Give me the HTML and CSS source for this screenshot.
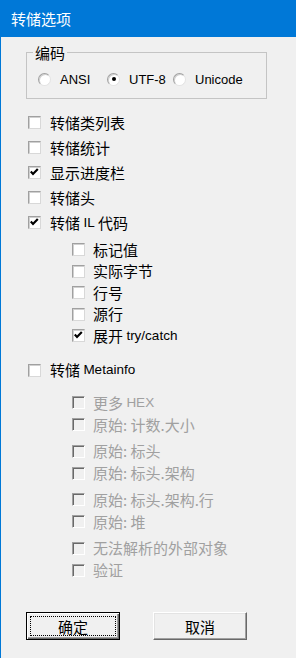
FILE: index.html
```html
<!DOCTYPE html>
<html lang="zh-CN">
<head>
    <meta charset="UTF-8">
    <meta name="viewport" content="width=device-width, initial-scale=1.0">
    <title>转储选项</title>
    <link rel="stylesheet" href="styles.css">
</head>
<body>

<div class="window">
    <div class="titlebar">转储选项</div>

    <div class="content">
        <!-- 编码 -->
        <div class="group">
            <span class="group-label">编码</span>
            <div class="radios">
                <label class="radio-item"><span class="radio"></span><span class="lat">ANSI</span></label>
                <label class="radio-item"><span class="radio selected"></span><span class="lat">UTF-8</span></label>
                <label class="radio-item"><span class="radio"></span><span class="lat">Unicode</span></label>
            </div>
        </div>

        <div class="checks">
            <div class="row"><span class="box"></span>转储类列表</div>
            <div class="row"><span class="box"></span>转储统计</div>
            <div class="row"><span class="box"><svg viewBox="0 0 11 11"><polyline points="1.8,4.6 4,6.9 8.8,2"/></svg></span>显示进度栏</div>
            <div class="row"><span class="box"></span>转储头</div>
            <div class="row"><span class="box"><svg viewBox="0 0 11 11"><polyline points="1.8,4.6 4,6.9 8.8,2"/></svg></span>转储 <span class="lat">IL</span> 代码</div>

            <div class="sub">
                <div class="row"><span class="box"></span>标记值</div>
                <div class="row"><span class="box"></span>实际字节</div>
                <div class="row"><span class="box"></span>行号</div>
                <div class="row"><span class="box"></span>源行</div>
                <div class="row"><span class="box"><svg viewBox="0 0 11 11"><polyline points="1.8,4.6 4,6.9 8.8,2"/></svg></span>展开 <span class="lat">try/catch</span></div>
            </div>

            <div class="row meta"><span class="box"></span>转储 <span class="lat">Metainfo</span></div>

            <div class="disabled">
                <div class="pair">
                    <div class="row"><span class="box"></span>更多 <span class="lat">HEX</span></div>
                    <div class="row"><span class="box"></span>原始: 计数.大小</div>
                </div>
                <div class="pair">
                    <div class="row"><span class="box"></span>原始: 标头</div>
                    <div class="row"><span class="box"></span>原始: 标头.架构</div>
                </div>
                <div class="pair">
                    <div class="row"><span class="box"></span>原始: 标头.架构.行</div>
                    <div class="row"><span class="box"></span>原始: 堆</div>
                </div>
                <div class="pair">
                    <div class="row"><span class="box"></span>无法解析的外部对象</div>
                    <div class="row"><span class="box"></span>验证</div>
                </div>
            </div>
        </div>

        <div class="buttons">
            <button class="btn default"><span class="focus">确定</span></button>
            <button class="btn"><span class="focus none">取消</span></button>
        </div>
    </div>
</div>

</body>
</html>
```

FILE: styles.css
```css
* {
    margin: 0;
    padding: 0;
    box-sizing: border-box;
}

html, body {
    width: 296px;
    height: 658px;
    overflow: hidden;
}

body {
    font-family: "Noto Sans CJK SC", "Liberation Sans", sans-serif;
    font-size: 15px;
    color: #000;
    background: #f0f0f0;
}

.lat {
    font-family: "Liberation Sans", "Noto Sans CJK SC", sans-serif;
    font-size: 13px;
}

.row .lat {
    font-size: 13.5px;
}

.window {
    height: 658px;
    border-left: 1px solid #0078d7;
}

.titlebar {
    height: 37px;
    line-height: 37px;
    padding-left: 10px;
    background: #0078d7;
    color: #fff;
}

.content {
    padding: 15px 0 0 25px;
}

/* group box */
.group {
    position: relative;
    width: 241px;
    height: 47px;
    border: 1px solid #c4c4c4;
}

.group-label {
    position: absolute;
    top: -9px;
    left: 6px;
    padding: 0 2px;
    line-height: 18px;
    background: #f0f0f0;
}

.radios {
    display: grid;
    grid-template-columns: 69px 66px auto;
    margin: 18px 0 0 11px;
}

.radio-item {
    display: flex;
    align-items: center;
    gap: 9px;
    height: 16px;
}

.radio {
    position: relative;
    width: 13px;
    height: 13px;
    border-radius: 50%;
    border: 1px solid;
    border-color: #a0a0a0 #e3e3e3 #e3e3e3 #a0a0a0;
    box-shadow: inset 1px 1px #d0d0d0;
    background: #fff;
}

.radio.selected::after {
    content: "";
    position: absolute;
    top: 3.5px;
    left: 3.5px;
    width: 4px;
    height: 4px;
    border-radius: 50%;
    background: #000;
}

/* checkboxes */
.checks {
    margin-top: 11px;
    padding-left: 2px;
}

.row {
    display: flex;
    align-items: center;
    height: 25px;
    line-height: 16px;
    white-space: pre;
}

.box {
    flex: none;
    width: 13px;
    height: 13px;
    margin-right: 9px;
    border: 1px solid;
    border-color: #a0a0a0 #d8d8d8 #d8d8d8 #a0a0a0;
    box-shadow: inset 1px 1px #d0d0d0;
    background: #fff;
}

.box svg {
    display: block;
    width: 11px;
    height: 11px;
    fill: none;
    stroke: #000;
    stroke-width: 2.2;
}

.sub {
    margin-top: 4px;
    padding-left: 44px;
}

.sub .row {
    height: 21.5px;
}

.sub .box {
    margin-right: 8px;
}

.meta {
    margin-top: 11px;
}

.disabled {
    margin-top: 9px;
    padding-left: 44px;
    color: #a0a0a0;
}

.pair {
    margin-bottom: 4.5px;
}

.disabled .row {
    height: 22px;
}

.disabled .box {
    margin-right: 8px;
    border-color: #a0a0a0 #fff #fff #a0a0a0;
    background: #f0f0f0;
    box-shadow: inset 1px 1px #696969;
}

/* buttons */
.buttons {
    display: flex;
    gap: 33px;
    margin-top: 31px;
}

.btn {
    width: 94px;
    height: 28px;
    padding: 3px;
    font-family: "Noto Sans CJK SC", sans-serif;
    font-size: 15px;
    color: #000;
    background: #f0f0f0;
    border: 1px solid;
    border-color: #fff #696969 #696969 #fff;
    box-shadow: inset -1px -1px #a0a0a0, inset 1px 1px #e3e3e3;
}

.btn.default {
    border: 1px solid #000;
    box-shadow: inset 1px 1px #fff, inset -1px -1px #696969, inset -2px -2px #a0a0a0;
}

.focus {
    display: flex;
    align-items: center;
    justify-content: center;
    height: 100%;
    border: 1px dotted #000;
}

.focus.none {
    border-color: transparent;
}
```
